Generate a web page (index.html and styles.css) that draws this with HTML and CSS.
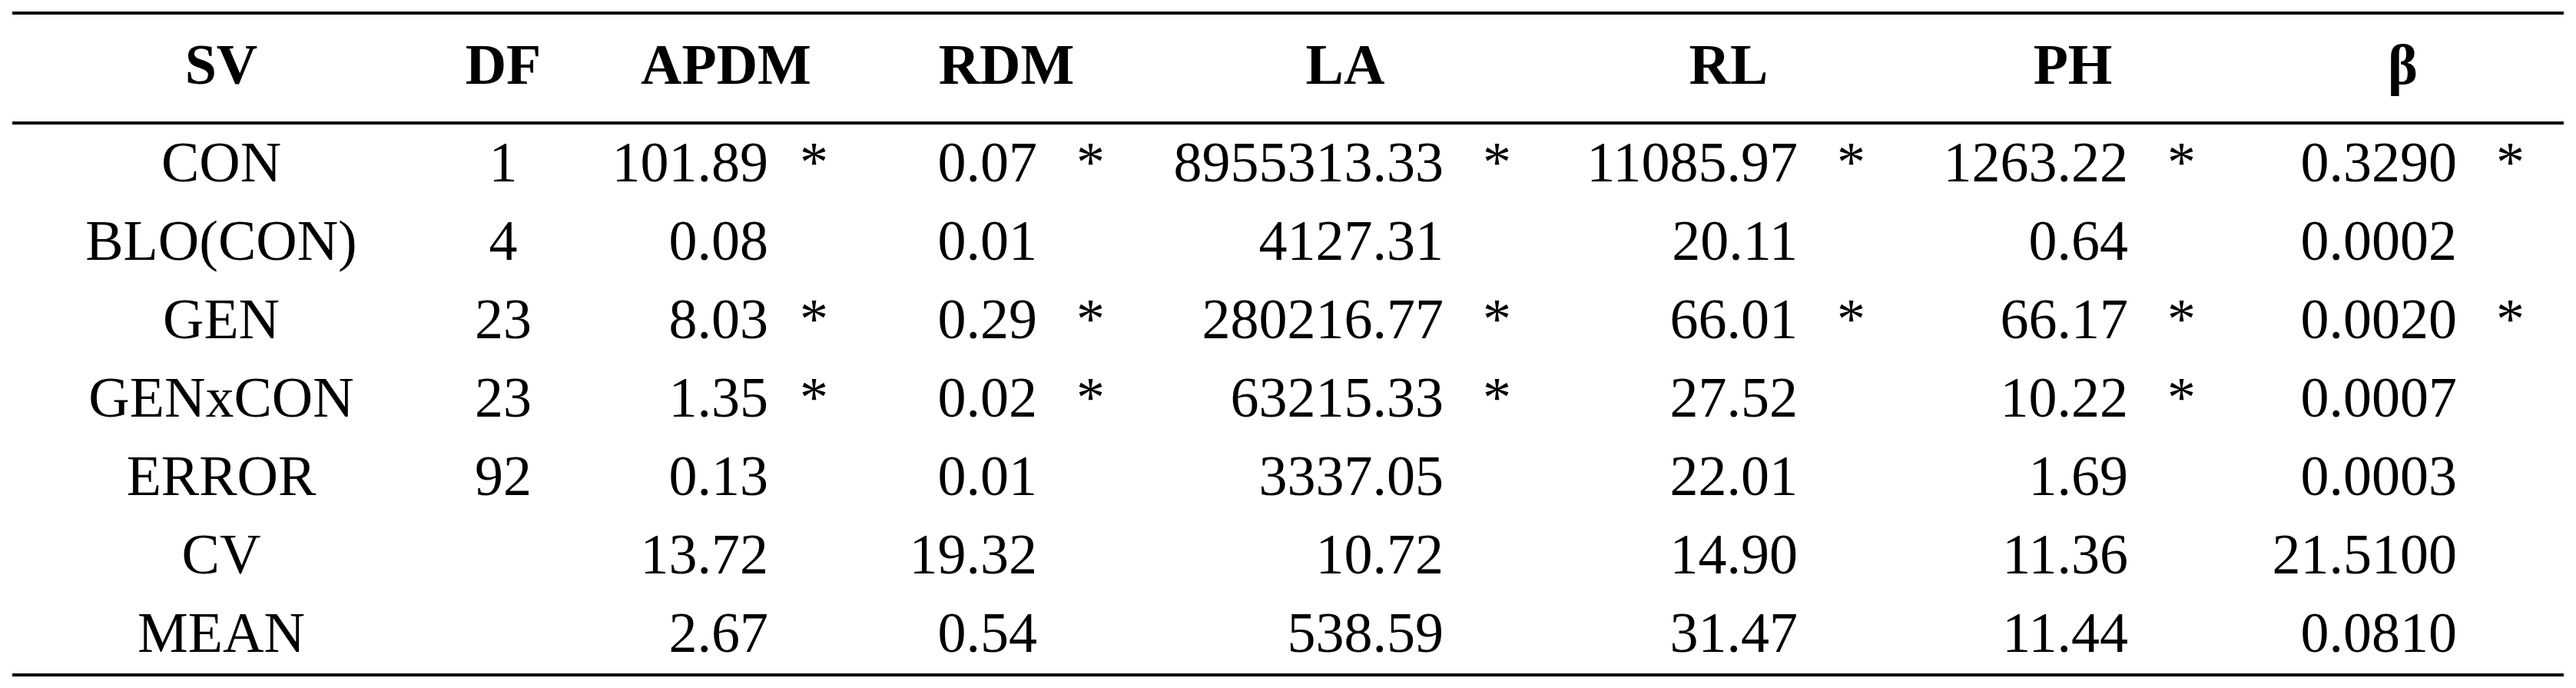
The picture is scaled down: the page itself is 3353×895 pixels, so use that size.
FILE: index.html
```html
<!DOCTYPE html>
<html lang="en">
<head>
    <meta charset="UTF-8">
    <meta name="viewport" content="width=device-width, initial-scale=1.0">
    <title>Analysis of variance</title>
    <link rel="stylesheet" href="styles.css">
</head>
<body>
    <table class="anova">
        <colgroup>
            <col class="c-sv">
            <col class="c-df">
            <col class="c-apdm">
            <col class="c-apdm-s">
            <col class="c-rdm">
            <col class="c-rdm-s">
            <col class="c-la">
            <col class="c-la-s">
            <col class="c-rl">
            <col class="c-rl-s">
            <col class="c-ph">
            <col class="c-ph-s">
            <col class="c-beta">
            <col class="c-beta-s">
        </colgroup>
        <thead>
            <tr>
                <th>SV</th>
                <th>DF</th>
                <th colspan="2">APDM</th>
                <th colspan="2">RDM</th>
                <th colspan="2">LA</th>
                <th colspan="2">RL</th>
                <th colspan="2">PH</th>
                <th colspan="2">&beta;</th>
            </tr>
        </thead>
        <tbody>
            <tr>
                <td class="label">CON</td>
                <td class="label">1</td>
                <td class="num">101.89</td><td class="star">*</td>
                <td class="num">0.07</td><td class="star">*</td>
                <td class="num">8955313.33</td><td class="star">*</td>
                <td class="num">11085.97</td><td class="star">*</td>
                <td class="num">1263.22</td><td class="star">*</td>
                <td class="num">0.3290</td><td class="star">*</td>
            </tr>
            <tr>
                <td class="label">BLO(CON)</td>
                <td class="label">4</td>
                <td class="num">0.08</td><td class="star"></td>
                <td class="num">0.01</td><td class="star"></td>
                <td class="num">4127.31</td><td class="star"></td>
                <td class="num">20.11</td><td class="star"></td>
                <td class="num">0.64</td><td class="star"></td>
                <td class="num">0.0002</td><td class="star"></td>
            </tr>
            <tr>
                <td class="label">GEN</td>
                <td class="label">23</td>
                <td class="num">8.03</td><td class="star">*</td>
                <td class="num">0.29</td><td class="star">*</td>
                <td class="num">280216.77</td><td class="star">*</td>
                <td class="num">66.01</td><td class="star">*</td>
                <td class="num">66.17</td><td class="star">*</td>
                <td class="num">0.0020</td><td class="star">*</td>
            </tr>
            <tr>
                <td class="label">GENxCON</td>
                <td class="label">23</td>
                <td class="num">1.35</td><td class="star">*</td>
                <td class="num">0.02</td><td class="star">*</td>
                <td class="num">63215.33</td><td class="star">*</td>
                <td class="num">27.52</td><td class="star"></td>
                <td class="num">10.22</td><td class="star">*</td>
                <td class="num">0.0007</td><td class="star"></td>
            </tr>
            <tr>
                <td class="label">ERROR</td>
                <td class="label">92</td>
                <td class="num">0.13</td><td class="star"></td>
                <td class="num">0.01</td><td class="star"></td>
                <td class="num">3337.05</td><td class="star"></td>
                <td class="num">22.01</td><td class="star"></td>
                <td class="num">1.69</td><td class="star"></td>
                <td class="num">0.0003</td><td class="star"></td>
            </tr>
            <tr>
                <td class="label">CV</td>
                <td class="label"></td>
                <td class="num">13.72</td><td class="star"></td>
                <td class="num">19.32</td><td class="star"></td>
                <td class="num">10.72</td><td class="star"></td>
                <td class="num">14.90</td><td class="star"></td>
                <td class="num">11.36</td><td class="star"></td>
                <td class="num">21.5100</td><td class="star"></td>
            </tr>
            <tr>
                <td class="label">MEAN</td>
                <td class="label"></td>
                <td class="num">2.67</td><td class="star"></td>
                <td class="num">0.54</td><td class="star"></td>
                <td class="num">538.59</td><td class="star"></td>
                <td class="num">31.47</td><td class="star"></td>
                <td class="num">11.44</td><td class="star"></td>
                <td class="num">0.0810</td><td class="star"></td>
            </tr>
        </tbody>
    </table>
</body>
</html>
```

FILE: styles.css
```css
body {
    margin: 0;
    padding: 15px 0 0 16px;
    background-color: #fff;
    color: #000;
    font-family: "Liberation Serif", "Times New Roman", serif;
}

.anova {
    table-layout: fixed;
    width: 3321px;
    border-collapse: separate;
    border-spacing: 0;
    font-size: 74px;
}

/* column widths, so each value column ends where its figures end */
.c-sv { width: 544px; }
.c-df { width: 190px; }
.c-apdm { width: 250px; }
.c-apdm-s { width: 140px; }
.c-rdm { width: 210px; }
.c-rdm-s { width: 130px; }
.c-la { width: 399px; }
.c-la-s { width: 143px; }
.c-rl { width: 318px; }
.c-rl-s { width: 138px; }
.c-ph { width: 292px; }
.c-ph-s { width: 148px; }
.c-beta { width: 280px; }
.c-beta-s { width: 139px; }

th {
    font-weight: bold;
    text-align: center;
    line-height: 130px;
    padding: 0 0 9px;
    border-top: 4px solid #000;
    border-bottom: 4px solid #000;
    white-space: nowrap;
}

td {
    line-height: 98px;
    padding: 0 0 4px;
    white-space: nowrap;
}

tbody tr:last-child td {
    border-bottom: 4px solid #000;
}

.label {
    text-align: center;
}

.num {
    text-align: right;
}

.star {
    text-align: left;
    padding-left: 51px;
}

/* the APDM asterisks sit a little closer to their figures */
td.star:nth-child(4) {
    padding-left: 41px;
}
```
